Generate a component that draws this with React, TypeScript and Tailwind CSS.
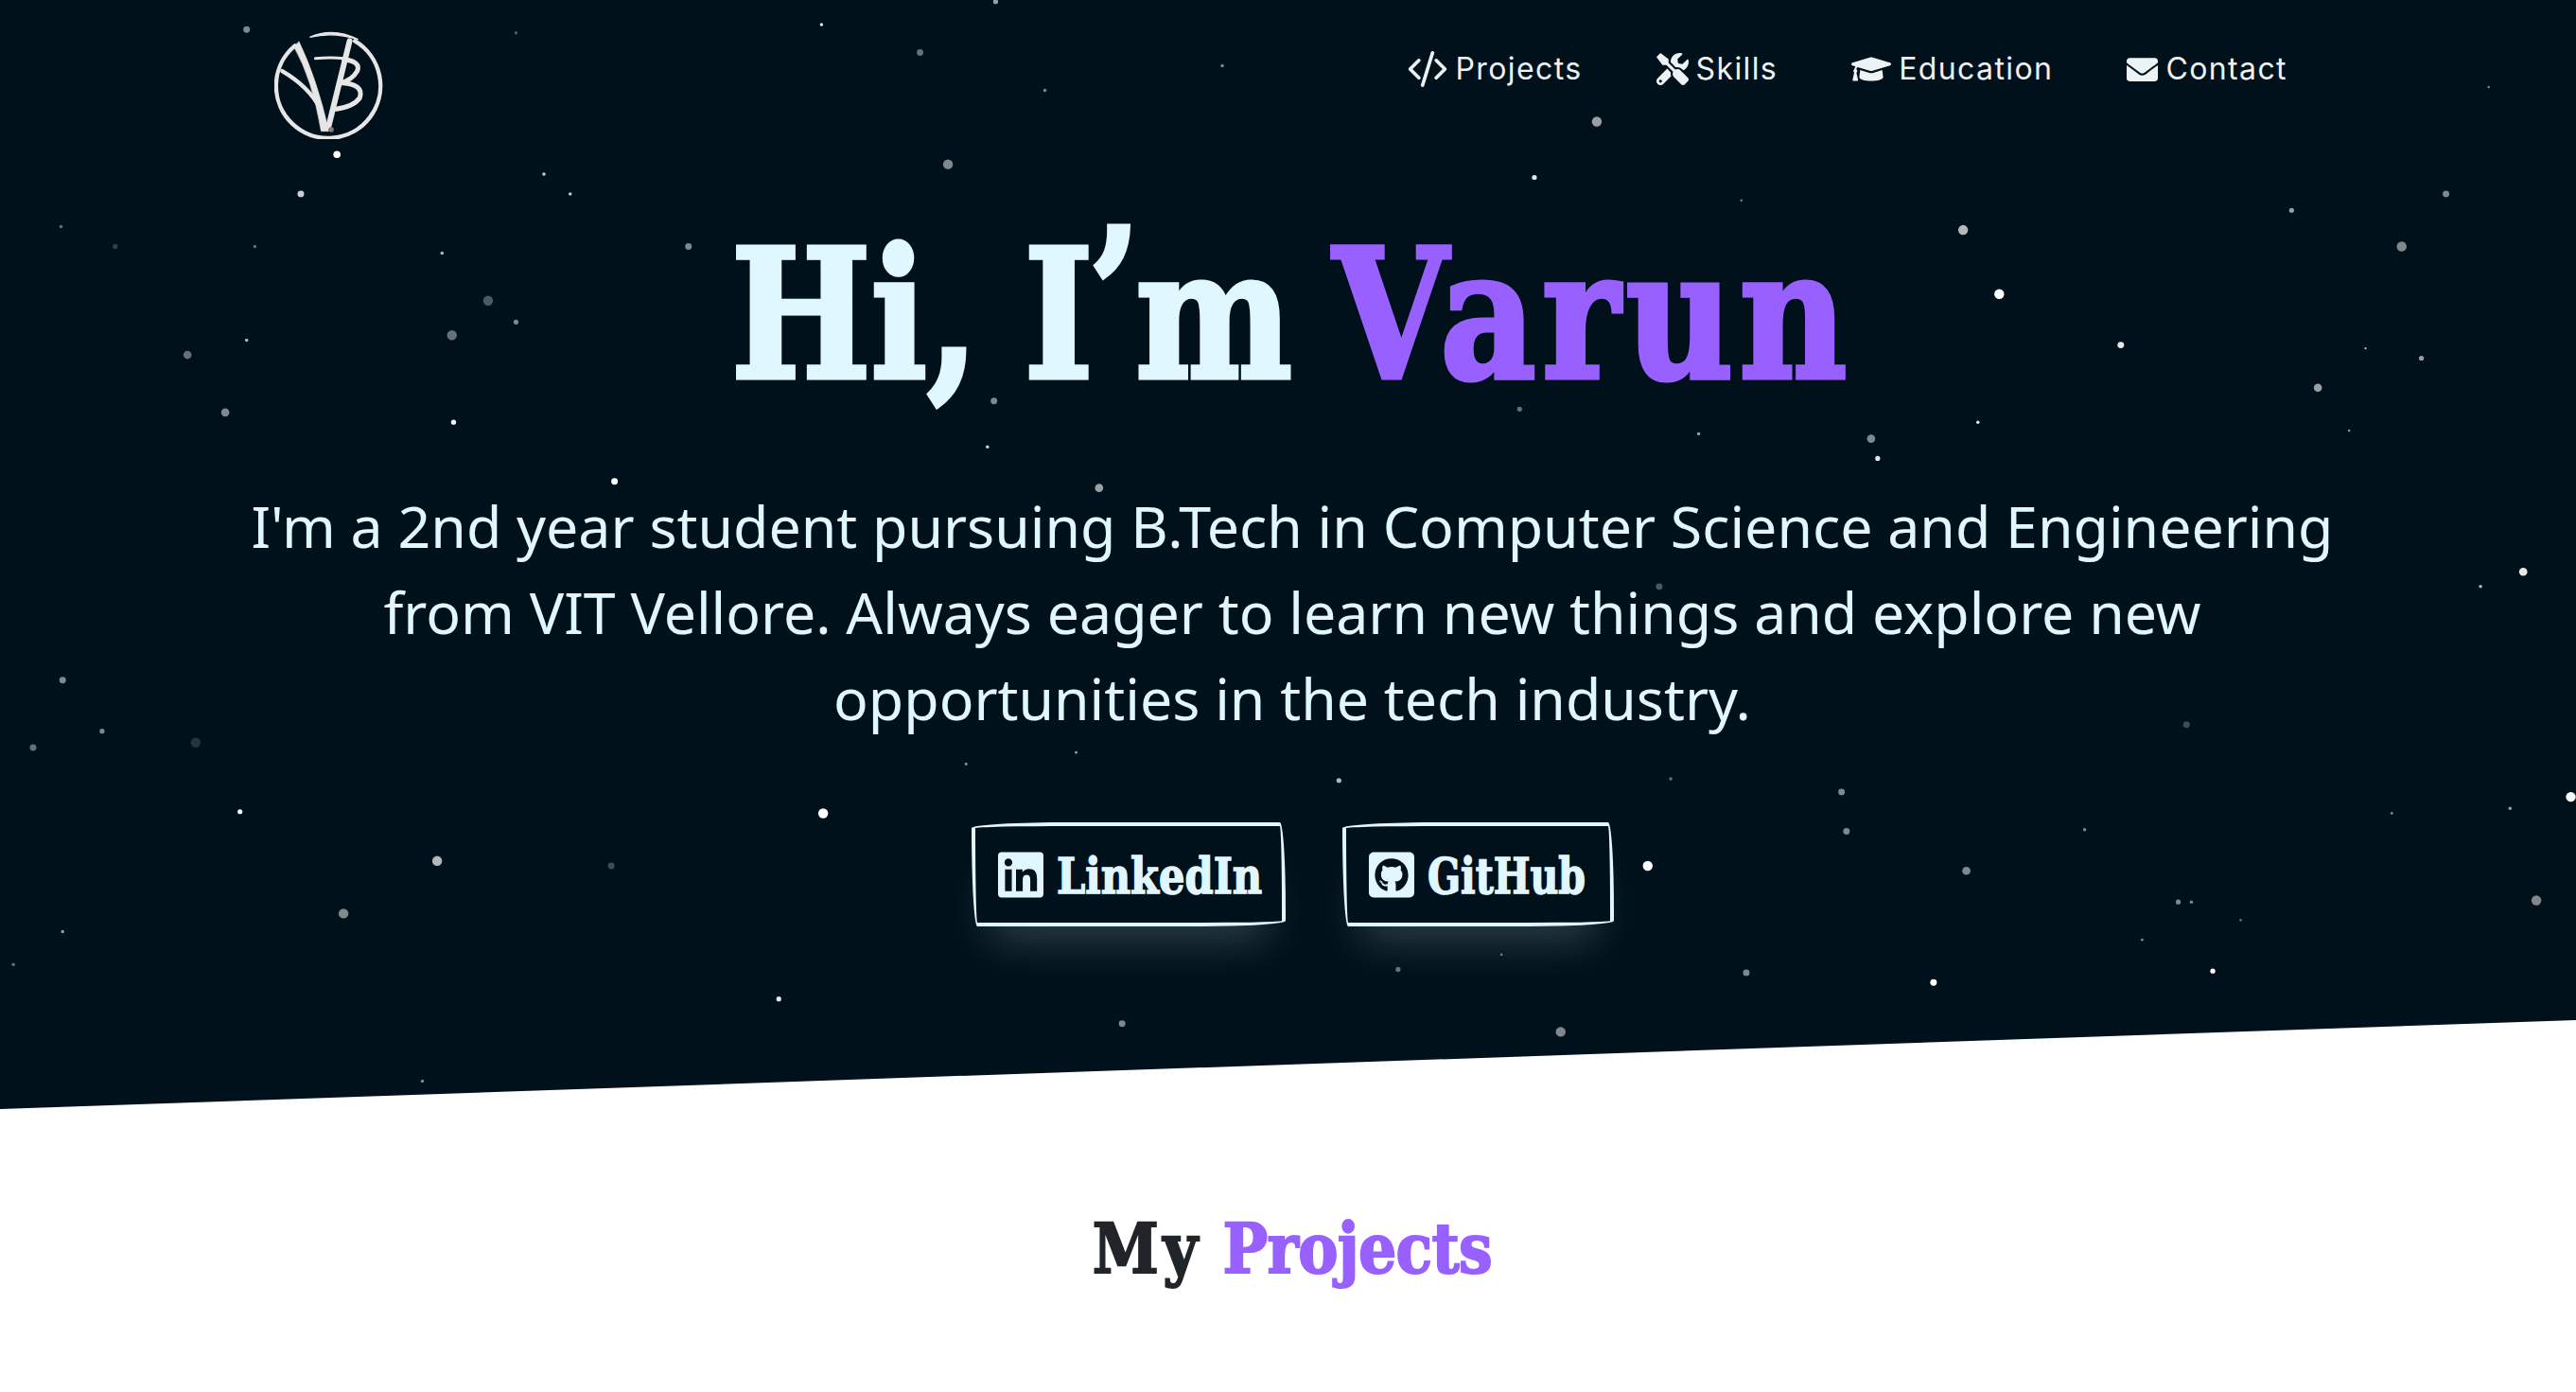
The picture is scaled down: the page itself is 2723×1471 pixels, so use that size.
import { BsCodeSlash } from 'react-icons/bs';
import { FaTools, FaGraduationCap, FaEnvelope, FaLinkedin, FaGithubSquare } from 'react-icons/fa';

// x, y (in 1568 wide space), radius, opacity
const stars: number[][] = [
  [150,18,2,.5],[183,118,2,.8],[205,94,2.2,1],[560,32,2,.4],[577,100,3,.5],[606,1,1.5,.6],[972,74,3,.6],[934,108,1.5,.9],
  [1195,140,3,.7],[1217,179,3,1],[1291,210,2,.9],[1411,236,2.5,.6],[1462,150,3,.5],[1489,118,2,.5],[1395,128,1.5,.6],[1474,218,1.5,.6],
  [1143,279,1.5,.9],[1139,267,2.5,.5],[1204,257,1,.9],[1430,262,.7,.6],[1536,348,2.5,.9],[1510,357,1,.7],[1565,485,3,1],[1544,548,3,.5],
  [1528,492,1,.6],[1347,591,1.5,1],[1177,598,2,1],[1063,592,2,.5],[1003,527,3,1],[1121,482,2,.5],[1124,506,2,.5],[1197,530,2.5,.5],
  [950,628,3,.5],[683,623,2,.5],[474,608,1.5,.9],[501,495,3,1],[266,524,3,.7],[209,556,3,.5],[146,494,1.5,1],[38,414,2,.5],
  [62,445,1.5,.5],[20,455,2,.4],[38,567,1,.6],[8,587,1,.4],[257,658,1,.5],[374,293,2,1],[276,257,1.5,1],[137,251,2.5,.5],
  [114,216,2.5,.4],[275,204,3,.4],[297,183,3,.3],[314,196,1.5,.5],[150,207,1,.7],[269,154,1,.7],[155,150,1,.4],[37,138,1,.4],
  [347,118,1,.8],[331,106,1,.8],[419,150,2,.5],[601,272,1,.8],[605,244,2,.5],[669,297,2.5,.6],[500,15,1,.9],[744,40,1,.5],
  [1515,53,.7,.5],[1034,264,1,.6],[925,249,1.5,.4],[1010,357,2,.3],[1334,549,1,.5],[1326,549,1.5,.5],[1304,572,.8,.5],[1364,560,.8,.4],
  [1456,495,.8,.5],[815,475,1.5,.7],[1017,474,1,.4],[1331,441,2,.25],[655,458,.8,.6],[588,465,.8,.6],[372,527,2,.25],[119,452,3,.15],
  [851,590,1.5,.4],[914,581,.7,.5],[1269,505,1,.5],[314,20,1,.3],[636,55,1,.5],[70,150,1.5,.2],[1440,212,.7,.7],[1060,122,.7,.5],
];

function Logo() {
  return (
    <svg viewBox="150 90 350 350" className="w-[117px] h-[117px]" fill="none" stroke="#e6e6e6" strokeLinecap="round">
      <path d="M405 130 A165 165 0 1 1 215 145" strokeWidth="13" />
      <path d="M262 118 Q335 85 415 125 Q335 100 262 118Z" fill="#e6e6e6" strokeWidth="4" />
      <path d="M228 132 Q285 250 322 415 L298 415 Q270 250 212 148Z" fill="#e6e6e6" strokeWidth="2" />
      <path d="M175 225 Q260 275 296 345" strokeWidth="13" />
      <path d="M388 130 L322 398" strokeWidth="18" />
      <path d="M280 185 Q330 180 370 185" strokeWidth="9" />
      <path d="M370 188 Q425 195 412 225 Q395 255 358 262 Q435 265 420 310 Q400 338 345 345" strokeWidth="15" />
      <circle cx="330" cy="410" r="8" fill="#7b7f83" stroke="none" />
    </svg>
  );
}

export default function App() {
  const navLinks = [
    { name: 'Projects', icon: <BsCodeSlash className="w-[42px] h-[42px]" stroke="currentColor" strokeWidth={0.4} /> },
    { name: 'Skills', icon: <FaTools className="w-[34px] h-[34px]" /> },
    { name: 'Education', icon: <FaGraduationCap className="w-[42px] h-[42px]" /> },
    { name: 'Contact', icon: <FaEnvelope className="w-[33px] h-[33px]" /> },
  ];

  return (
    <div className="h-screen overflow-hidden bg-white">
      <header className="relative h-[1172px] bg-[#01111b] [clip-path:polygon(0_0,100%_0,100%_1078px,0_100%)]">
        {/* star field */}
        <svg viewBox="0 0 1568 675" className="absolute top-0 left-0 w-full h-[1172px]">
          {stars.map(([x, y, r, o], i) => (
            <circle key={i} cx={x} cy={y} r={r} fill="#fff" opacity={o} />
          ))}
        </svg>

        <div className="relative">
          {/* Navbar */}
          <nav className="flex justify-between items-start pl-[290px] pr-[305px] pt-[30px]">
            <Logo />
            <ul className="flex items-center gap-[78px] h-[86px] text-[#edf2f4] text-[32px] tracking-[1.4px] font-['Inter',sans-serif]">
              {navLinks.map((l) => (
                <li key={l.name} className="flex items-center gap-2">
                  {l.icon}
                  <span>{l.name}</span>
                </li>
              ))}
            </ul>
          </nav>

          {/* Intro */}
          <div className="flex flex-col items-center pl-[9px]">
            <h1 className="mt-[66px] text-[190px] leading-[240px] font-bold whitespace-nowrap scale-x-[0.824] [word-spacing:-8px] [-webkit-text-stroke:5px_currentColor] text-[#e0f7ff] font-['DejaVu_Serif',serif]">
              Hi, <span className="tracking-[-6px]">I<span className="align-[22px] leading-[0]">&rsquo;</span>m</span>{' '}
              <span className="text-[#9860ff] tracking-[7.5px]">Varun</span>
            </h1>
            <p className="mt-[57px] w-[2240px] text-center text-[60.8px] leading-[91px] text-[#e0f7ff] font-['Noto_Sans',sans-serif]">
              I'm a 2nd year student pursuing B.Tech in Computer Science and Engineering from VIT Vellore. Always eager to learn new things and explore new opportunities in the tech industry.
            </p>
            <div className="mt-[86px] flex gap-[60px]">
              <a className="flex items-center gap-[14px] h-[110px] px-[24px] border-[4px] border-[#e0f7ff] rounded-[255px_15px_225px_15px/15px_225px_15px_255px] shadow-[0_35px_45px_-20px_rgba(224,247,255,0.2)] text-[#e0f7ff] text-[52px] font-bold font-['DejaVu_Serif',serif]">
                <FaLinkedin className="h-[55px] w-[48px] shrink-0" />
                <span className="w-[214px] pt-[3px] whitespace-nowrap origin-left scale-x-[0.83] [-webkit-text-stroke:1.5px_currentColor]">LinkedIn</span>
              </a>
              <a className="flex items-center gap-[14px] h-[110px] px-[24px] border-[4px] border-[#e0f7ff] rounded-[255px_15px_225px_15px/15px_225px_15px_255px] shadow-[0_35px_45px_-20px_rgba(224,247,255,0.2)] text-[#e0f7ff] text-[52px] font-bold font-['DejaVu_Serif',serif]">
                <FaGithubSquare className="h-[55px] w-[48px] shrink-0" />
                <span className="w-[169px] pt-[3px] whitespace-nowrap origin-left scale-x-[0.79] [-webkit-text-stroke:1.5px_currentColor]">GitHub</span>
              </a>
            </div>
          </div>
        </div>
      </header>

      <section className="flex justify-center pl-[9px] pt-[100px]">
        <h2 className="text-[72px] leading-[96px] font-bold whitespace-nowrap scale-x-[0.88] [-webkit-text-stroke:2px_currentColor] text-[#212529] font-['DejaVu_Serif',serif]">
          <span className="tracking-[5px]">My</span> <span className="text-[#9860ff] tracking-[-0.8px]">Projects</span>
        </h2>
      </section>
    </div>
  );
}
